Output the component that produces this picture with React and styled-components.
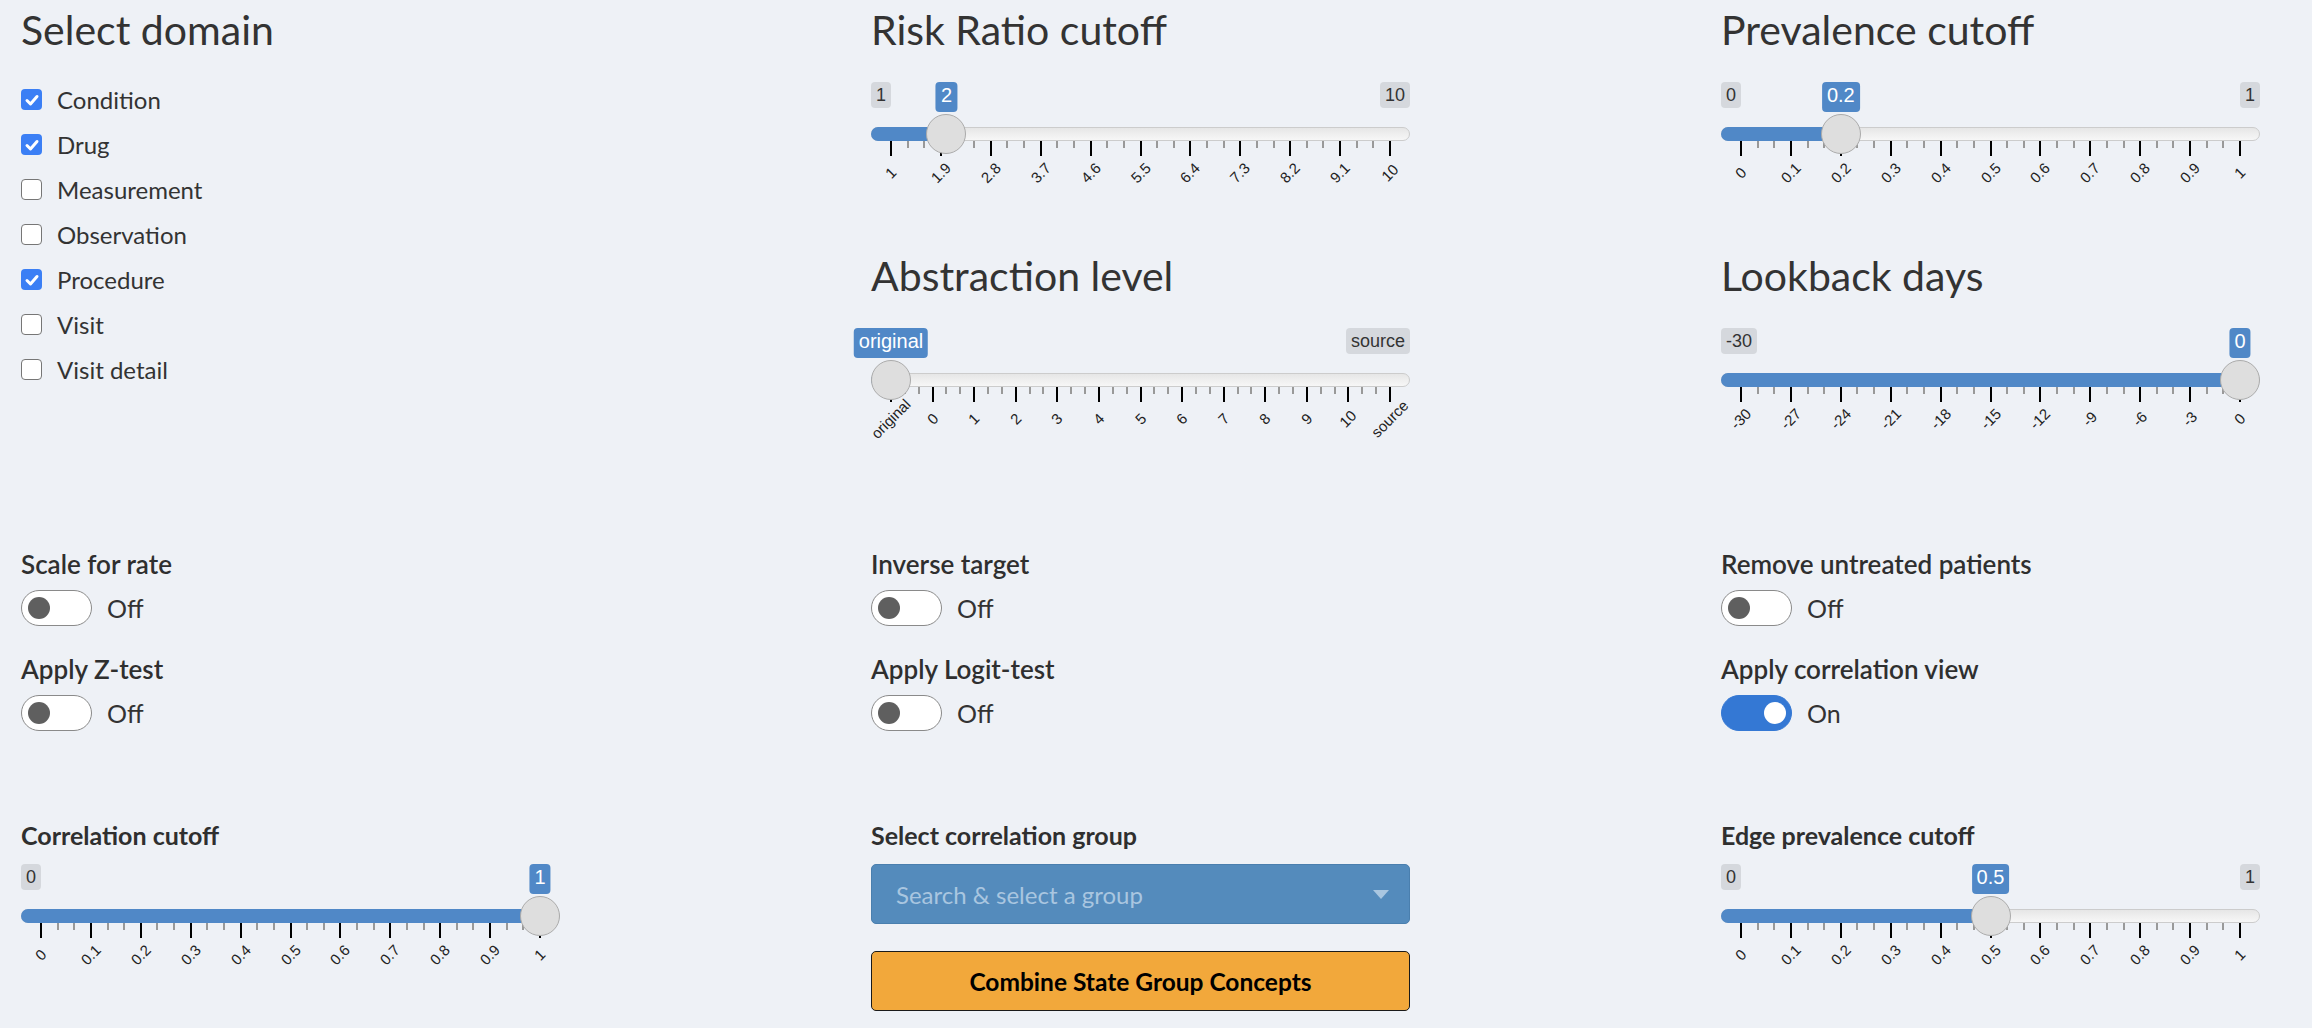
import React from 'react';
import styled, { createGlobalStyle } from 'styled-components';

const GlobalStyle = createGlobalStyle`
  html, body { margin: 0; padding: 0; background: #eef1f6; }
  body {
    font-family: Lato, "Noto Sans", sans-serif;
    color: #333;
    width: 2312px;
    height: 1028px;
    overflow: hidden;
  }
`;

const Page = styled.div`
  padding-left: 21px;
`;

const Row = styled.div`
  display: grid;
  grid-template-columns: repeat(3, 539px);
  column-gap: 311px;
  align-items: start;
  margin-top: ${p => p.$mt || 0}px;
`;

const Column = styled.div`
  display: flex;
  flex-direction: column;
`;

const Title = styled.h3`
  margin: 0;
  font-size: 41px;
  line-height: 60px;
  font-weight: 400;
  color: #333;
  white-space: nowrap;
`;

const CheckList = styled.div`
  display: flex;
  flex-direction: column;
  padding-top: 17px;
`;

const CheckRow = styled.label`
  display: flex;
  align-items: center;
  gap: 15px;
  height: 45px;
  font-size: 24px;
  color: #333;
`;

const CheckBox = styled.span`
  width: 21px;
  height: 21px;
  box-sizing: border-box;
  border-radius: 4px;
  display: flex;
  align-items: center;
  justify-content: center;
  background: ${p => (p.$checked ? '#3b7ff5' : '#fff')};
  border: ${p => (p.$checked ? 'none' : '1.5px solid #767676')};
`;

const Group = styled.div`
  display: flex;
  flex-direction: column;
  margin-top: ${p => p.$mt || 0}px;
`;

/* ---------- slider ---------- */
const SliderRoot = styled.div`
  position: relative;
  height: 110px;
  margin-top: ${p => p.$mt || 0}px;
  font-family: "Liberation Sans", Arial, sans-serif;
`;

const LabelRow = styled.div`
  display: flex;
  justify-content: space-between;
  height: 26px;
`;

const EdgeLabel = styled.span`
  visibility: ${p => (p.$hidden ? 'hidden' : 'visible')};
  height: 26px;
  line-height: 26px;
  padding: 0 5px;
  font-size: 18px;
  color: #333;
  background: rgba(0, 0, 0, 0.1);
  border-radius: 4px;
`;

const ValueLabel = styled.span`
  position: absolute;
  top: 0;
  transform: translateX(-50%);
  height: 26px;
  line-height: 27px;
  padding: 0 5px 4px;
  font-size: 20px;
  color: #fff;
  background: #5088c7;
  border-radius: 4px;
  white-space: nowrap;
`;

const Track = styled.div`
  position: relative;
  margin-top: 19px;
  height: 14px;
  box-sizing: border-box;
  border: 1px solid #cccccc;
  border-radius: 7px;
  background: linear-gradient(to bottom, #dedede -50%, #ffffff 150%);
`;

const Bar = styled.div`
  position: absolute;
  left: -1px;
  top: -1px;
  bottom: -1px;
  background: #5088c7;
  border-radius: 7px 0 0 7px;
`;

const Handle = styled.div`
  position: absolute;
  top: 32px;
  width: 40px;
  height: 40px;
  box-sizing: border-box;
  margin-left: -20px;
  border-radius: 50%;
  border: 1px solid #ababab;
  background: #dedede;
`;

const Scale = styled.div`
  position: relative;
  height: 51px;
  margin: 0 20px;
`;

const Tick = styled.span`
  position: absolute;
  top: 0;
  width: 2px;
  margin-left: -1px;
  height: ${p => (p.$major ? 15 : 7)}px;
  background: ${p => (p.$major ? '#000' : '#999')};
`;

const TickText = styled.span`
  position: absolute;
  top: 32px;
  font-size: 15px;
  line-height: 16px;
  color: #222;
  white-space: nowrap;
  transform: translate(-50%, -50%) rotate(-45deg);
`;

function Slider({ ticks, frac, min, max, value, hideMin, hideMax, mt }) {
  const n = ticks.length - 1;
  const marks = [];
  for (let i = 0; i <= n; i++) {
    const p = (i / n) * 100;
    marks.push(<Tick key={'M' + i} $major style={{ left: p + '%' }} />);
    if (i < n) {
      for (let k = 1; k <= 2; k++) {
        const q = ((i + k / 3) / n) * 100;
        marks.push(<Tick key={'m' + i + '-' + k} style={{ left: q + '%' }} />);
      }
    }
  }
  const hx = 20 + frac * 499;
  return (
    <SliderRoot $mt={mt}>
      <LabelRow>
        <EdgeLabel $hidden={hideMin}>{min}</EdgeLabel>
        <EdgeLabel $hidden={hideMax}>{max}</EdgeLabel>
      </LabelRow>
      <Track>
        <Bar style={{ width: hx + 1 + 'px' }} />
      </Track>
      <Scale>
        {marks}
        {ticks.map((t, i) => (
          <TickText key={'t' + i} style={{ left: (i / n) * 100 + '%' }}>
            {t}
          </TickText>
        ))}
      </Scale>
      <ValueLabel style={{ left: hx + 'px' }}>{value}</ValueLabel>
      <Handle style={{ left: hx + 'px' }} />
    </SliderRoot>
  );
}

/* ---------- toggles ---------- */
const ToggleField = styled.div`
  display: flex;
  flex-direction: column;
  margin-top: ${p => p.$mt || 0}px;
`;

const FieldLabel = styled.div`
  font-size: ${p => p.$size || 26}px;
  line-height: 34px;
  font-weight: ${p => p.$weight || 600};
  color: #2f2f2f;
  white-space: nowrap;
`;

const SwitchRow = styled.div`
  display: flex;
  align-items: center;
  gap: 15px;
  margin-top: 9px;
  height: 36px;
  font-size: 25px;
  color: #333;
`;

const SwitchTrack = styled.span`
  position: relative;
  width: 71px;
  height: 36px;
  box-sizing: border-box;
  border-radius: 18px;
  background: ${p => (p.$on ? '#3478d4' : '#fff')};
  border: 1px solid ${p => (p.$on ? '#3478d4' : '#8a8a8a')};
`;

const SwitchKnob = styled.span`
  position: absolute;
  top: 6px;
  width: 22px;
  height: 22px;
  border-radius: 50%;
  left: ${p => (p.$on ? '42px' : '6px')};
  background: ${p => (p.$on ? '#fff' : '#5f5f5f')};
`;

function Toggle({ label, on, mt }) {
  return (
    <ToggleField $mt={mt}>
      <FieldLabel>{label}</FieldLabel>
      <SwitchRow>
        <SwitchTrack $on={on}>
          <SwitchKnob $on={on} />
        </SwitchTrack>
        <span>{on ? 'On' : 'Off'}</span>
      </SwitchRow>
    </ToggleField>
  );
}

/* ---------- select & button ---------- */
const SelectBox = styled.div`
  margin-top: 12px;
  height: 60px;
  box-sizing: border-box;
  display: flex;
  align-items: center;
  justify-content: space-between;
  padding: 0 20px 0 24px;
  background: #548bbc;
  border: 1px solid #4a7fae;
  border-radius: 5px;
  color: #a9c6e0;
  font-size: 24px;
`;

const Caret = styled.span`
  width: 0;
  height: 0;
  border-left: 8px solid transparent;
  border-right: 8px solid transparent;
  border-top: 9px solid #a9c6e0;
`;

const ActionButton = styled.button`
  margin-top: 27px;
  height: 60px;
  width: 100%;
  box-sizing: border-box;
  background: #f2a83b;
  border: 1px solid #1a1a1a;
  border-radius: 5px;
  font-family: Lato, "Noto Sans", sans-serif;
  font-weight: 700;
  font-size: 24.5px;
  color: #000;
`;

const Check = () => (
  <svg width="16" height="16" viewBox="0 0 16 16">
    <path d="M3 8.5 L6.5 12 L13 4.5" fill="none" stroke="#fff" strokeWidth="3" strokeLinecap="round" strokeLinejoin="round" />
  </svg>
);

const domains = [
  ['Condition', true],
  ['Drug', true],
  ['Measurement', false],
  ['Observation', false],
  ['Procedure', true],
  ['Visit', false],
  ['Visit detail', false],
];

const zeroOne = ['0', '0.1', '0.2', '0.3', '0.4', '0.5', '0.6', '0.7', '0.8', '0.9', '1'];
const risk = ['1', '1.9', '2.8', '3.7', '4.6', '5.5', '6.4', '7.3', '8.2', '9.1', '10'];
const abstraction = ['original', '0', '1', '2', '3', '4', '5', '6', '7', '8', '9', '10', 'source'];
const lookback = ['-30', '-27', '-24', '-21', '-18', '-15', '-12', '-9', '-6', '-3', '0'];

export default function App() {
  return (
    <>
      <GlobalStyle />
      <Page>
        <Row>
          <Column>
            <Title>Select domain</Title>
            <CheckList>
              {domains.map(([name, on]) => (
                <CheckRow key={name}>
                  <CheckBox $checked={on}>{on && <Check />}</CheckBox>
                  {name}
                </CheckRow>
              ))}
            </CheckList>
          </Column>
          <Column>
            <Group>
              <Title>Risk Ratio cutoff</Title>
              <Slider mt={22} ticks={risk} frac={1 / 9} min="1" max="10" value="2" />
            </Group>
            <Group $mt={54}>
              <Title>Abstraction level</Title>
              <Slider mt={22} ticks={abstraction} frac={0} min="original" max="source" value="original" hideMin />
            </Group>
          </Column>
          <Column>
            <Group>
              <Title>Prevalence cutoff</Title>
              <Slider mt={22} ticks={zeroOne} frac={0.2} min="0" max="1" value="0.2" />
            </Group>
            <Group $mt={54}>
              <Title>Lookback days</Title>
              <Slider mt={22} ticks={lookback} frac={1} min="-30" max="0" value="0" hideMax />
            </Group>
          </Column>
        </Row>

        <Row $mt={109}>
          <Column>
            <Toggle label="Scale for rate" on={false} />
            <Toggle label="Apply Z-test" on={false} mt={26} />
          </Column>
          <Column>
            <Toggle label="Inverse target" on={false} />
            <Toggle label="Apply Logit-test" on={false} mt={26} />
          </Column>
          <Column>
            <Toggle label="Remove untreated patients" on={false} />
            <Toggle label="Apply correlation view" on mt={26} />
          </Column>
        </Row>

        <Row $mt={87}>
          <Column>
            <FieldLabel $weight={700} $size={25}>Correlation cutoff</FieldLabel>
            <Slider mt={12} ticks={zeroOne} frac={1} min="0" max="1" value="1" hideMax />
          </Column>
          <Column>
            <FieldLabel $weight={700} $size={25}>Select correlation group</FieldLabel>
            <SelectBox>
              <span>Search &amp; select a group</span>
              <Caret />
            </SelectBox>
            <ActionButton>Combine State Group Concepts</ActionButton>
          </Column>
          <Column>
            <FieldLabel $weight={700} $size={25}>Edge prevalence cutoff</FieldLabel>
            <Slider mt={12} ticks={zeroOne} frac={0.5} min="0" max="1" value="0.5" />
          </Column>
        </Row>
      </Page>
    </>
  );
}
